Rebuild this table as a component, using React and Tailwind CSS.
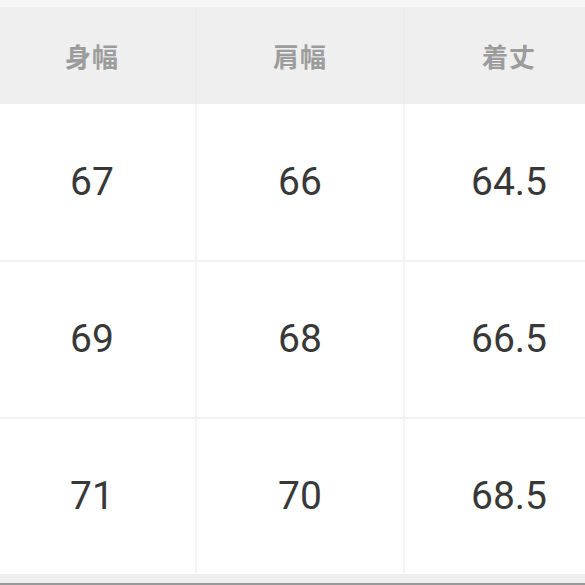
export default function App() {
  const headers = ["身幅", "肩幅", "着丈"];
  const rows = [
    ["67", "66", "64.5"],
    ["69", "68", "66.5"],
    ["71", "70", "68.5"],
  ];
  const heights = ["h-[158px]", "h-[157px]", "h-[155px]"];
  return (
    <div className="w-[585px] h-[585px] overflow-hidden bg-white flex flex-col">
      <div className="h-[7px] shrink-0 bg-[#f7f7f7]" />
      <div className="ml-[-11px] w-[624px] shrink-0">
        <div className="grid grid-cols-3 h-[97px] bg-[#efefef]">
          {headers.map((h, i) => (
            <div
              key={h}
              className={`flex items-center justify-center ${i < 2 ? "border-r-2 border-[#ececec]" : ""}`}
            >
              <span
                className="text-[26px] font-bold text-[#9c9c9c] tracking-[1px]"
                style={{ fontFamily: '"Noto Sans CJK JP", "Noto Sans", sans-serif' }}
              >
                {h}
              </span>
            </div>
          ))}
        </div>
        {rows.map((r, ri) => (
          <div
            key={ri}
            className={`grid grid-cols-3 ${heights[ri]} ${ri < 2 ? "border-b-2 border-[#f3f3f3]" : ""}`}
          >
            {r.map((v, ci) => (
              <div
                key={ci}
                className={`flex items-center justify-center ${ci < 2 ? "border-r-2 border-[#f3f3f3]" : ""}`}
              >
                <span
                  className="text-[39px] text-[#383838] leading-none"
                  style={{ fontFamily: "Roboto, Arial, sans-serif" }}
                >
                  {v}
                </span>
              </div>
            ))}
          </div>
        ))}
      </div>
      <div className="h-[9px] shrink-0 bg-[#efefef]" />
      <div className="flex-1 bg-[#9a9a9a]" />
    </div>
  );
}
